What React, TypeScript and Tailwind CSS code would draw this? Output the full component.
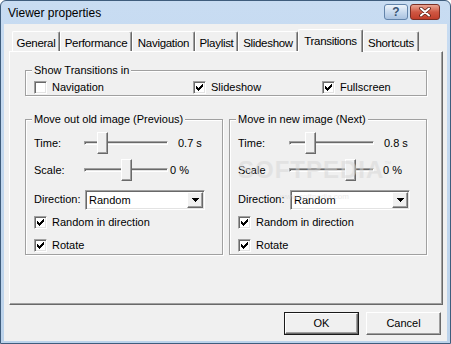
import React from 'react'

const raised =
  'border border-t-white border-l-white border-r-[#696969] border-b-[#696969] shadow-[inset_-1px_-1px_0_#a0a0a0]'
const sunken =
  'border border-t-[#a0a0a0] border-l-[#a0a0a0] border-r-white border-b-white shadow-[inset_1px_1px_0_#696969,inset_-1px_-1px_0_#e3e3e3]'

// classic 7x7 tick, drawn one 3px column at a time
function CheckMark() {
  const tops = [2, 3, 4, 3, 2, 1, 0]
  return (
    <svg width="7" height="7" viewBox="0 0 7 7" shapeRendering="crispEdges">
      {tops.map((t, i) => (
        <rect key={i} x={i} y={t} width="1" height="3" fill="#000" />
      ))}
    </svg>
  )
}

function CheckBox({ label, checked = true, className = '' }: { label: string; checked?: boolean; className?: string }) {
  return (
    <label className={`flex items-center gap-[5px] ${className}`}>
      <span className={`w-[13px] h-[13px] shrink-0 bg-white flex items-center justify-center ${sunken}`}>
        {checked && <CheckMark />}
      </span>
      <span>{label}</span>
    </label>
  )
}

function Slider({
  label,
  value,
  labelClass,
  trackClass,
  thumbClass,
  valueClass,
  rowClass,
}: {
  label: string
  value: string
  labelClass: string
  trackClass: string
  thumbClass: string
  valueClass: string
  rowClass: string
}) {
  return (
    <div className={`flex items-center ${rowClass}`}>
      <span className={labelClass}>{label}</span>
      <div className={`relative h-[22px] flex items-center ${trackClass}`}>
        <div className="w-full h-[4px] border border-t-[#a0a0a0] border-l-[#a0a0a0] border-r-white border-b-white bg-[#e3e3e3] shadow-[inset_1px_1px_0_#696969]" />
        <div className={`absolute top-0 w-[11px] h-[22px] bg-[#f0f0f0] ${raised} ${thumbClass}`} />
      </div>
      <span className={valueClass}>{value}</span>
    </div>
  )
}

function Select({ value, className = '' }: { value: string; className?: string }) {
  return (
    <div className={`h-[20px] w-[120px] bg-white flex items-stretch p-[1px] ${sunken} ${className}`}>
      <span className="flex-1 pl-[2px] leading-[16px]">{value}</span>
      <span className={`w-[16px] bg-[#f0f0f0] flex items-center justify-center ${raised}`}>
        <svg width="7" height="4" viewBox="0 0 7 4" shapeRendering="crispEdges">
          <polygon points="0,0 7,0 3.5,4" fill="#000" />
        </svg>
      </span>
    </div>
  )
}

function GroupBox({ title, className = '', children }: { title: string; className?: string; children: React.ReactNode }) {
  return (
    <fieldset
      className={`border border-[#a0a0a0] shadow-[1px_1px_0_#fff,inset_1px_1px_0_#fff] pl-[8px] pr-[6px] ${className}`}
    >
      <legend className="-ml-[2px] px-[2px] leading-[13px] bg-[#f0f0f0]">{title}</legend>
      {children}
    </fieldset>
  )
}

const tabs = [
  { name: 'General', w: 'w-[48px]' },
  { name: 'Performance', w: 'w-[72px]' },
  { name: 'Navigation', w: 'w-[63px]' },
  { name: 'Playlist', w: 'w-[43px]' },
  { name: 'Slideshow', w: 'w-[60px]' },
  { name: 'Transitions', w: 'w-[65px]', active: true },
  { name: 'Shortcuts', w: 'w-[56px]' },
]

export default function App() {
  return (
    <div className="relative w-[451px] h-[344px] rounded-t-[6px] border border-[#3f5d7d] bg-gradient-to-b from-[#c8dcf2] to-[#bcd3eb] font-['Liberation_Sans',Arial,sans-serif] text-[11px] text-black overflow-hidden">
      {/* title bar */}
      <div className="flex items-start justify-between h-[23px] pl-[7px] pr-[10px]">
        <span className="text-[12px] leading-[24px]">Viewer properties</span>
        <div className="flex gap-[2px] pt-[3px]">
          <div className="w-[24px] h-[16px] rounded-[3px] border border-[#6384aa] bg-gradient-to-b from-[#eef4fb] via-[#c9daee] to-[#a9c2e0] flex items-center justify-center text-[12px] font-bold leading-none text-[#3a5473]">
            ?
          </div>
          <div className="w-[30px] h-[16px] rounded-[3px] border border-[#7a2f25] bg-gradient-to-b from-[#e9a594] via-[#cf5743] to-[#c13e2b] flex items-center justify-center">
            <svg width="12" height="10" viewBox="0 0 12 10">
              <path d="M2 1.5 L10 8.5 M10 1.5 L2 8.5" stroke="#5a2018" strokeWidth="3.6" strokeLinecap="round" />
              <path d="M2 1.5 L10 8.5 M10 1.5 L2 8.5" stroke="#fff" strokeWidth="2" strokeLinecap="round" />
            </svg>
          </div>
        </div>
      </div>

      {/* client area */}
      <div className="mx-[3px] mb-[2px] h-[317px] bg-[#f0f0f0] pt-[5px] px-[5px]">
        <div className="flex items-end h-[22px] pl-[3px]">
          {tabs.map(t =>
            t.active ? (
              <div
                key={t.name}
                className={`relative z-10 -mb-px h-[23px] ${t.w} bg-[#f0f0f0] border-t border-l border-r border-t-white border-l-white border-r-[#696969] rounded-t-[2px] shadow-[inset_-1px_0_0_#a0a0a0] flex justify-center pt-[3px] tracking-[-0.3px] text-[11.5px]`}
              >
                {t.name}
              </div>
            ) : (
              <div
                key={t.name}
                className={`h-[20px] ${t.w} bg-[#f0f0f0] border-t border-l border-r border-t-white border-l-white border-r-[#696969] rounded-t-[2px] shadow-[inset_-1px_0_0_#a0a0a0] flex justify-center pt-[3px] tracking-[-0.3px] text-[11.5px]`}
              >
                {t.name}
              </div>
            )
          )}
        </div>

        <div className={`w-[434px] h-[254px] bg-[#f0f0f0] ${raised} px-[15px] pt-[12px]`}>
          <GroupBox title="Show Transitions in">
            <div className="flex items-center h-[15px] mt-[3px]">
              <CheckBox label="Navigation" checked={false} className="w-[159px]" />
              <CheckBox label="Slideshow" className="w-[129px]" />
              <CheckBox label="Fullscreen" />
            </div>
          </GroupBox>

          <div className="flex gap-[6px] mt-[17px]">
            <GroupBox title="Move out old image (Previous)" className="flex-1">
              <div className="pt-[5px]">
                <Slider
                  label="Time:"
                  value="0.7 s"
                  rowClass="h-[24px]"
                  labelClass="w-[50px]"
                  trackClass="w-[84px]"
                  thumbClass="left-[13px]"
                  valueClass="ml-[10px]"
                />
                <Slider
                  label="Scale:"
                  value="0 %"
                  rowClass="h-[30px]"
                  labelClass="w-[50px]"
                  trackClass="w-[84px]"
                  thumbClass="left-[37px]"
                  valueClass="ml-[2px]"
                />
                <div className="flex items-center h-[29px]">
                  <span className="w-[51px]">Direction:</span>
                  <Select value="Random" />
                </div>
                <CheckBox label="Random in direction" className="h-[17px]" />
                <CheckBox label="Rotate" className="h-[17px] mt-[6px]" />
              </div>
            </GroupBox>

            <GroupBox title="Move in new image (Next)" className="flex-1">
              <div className="pt-[5px]">
                <Slider
                  label="Time:"
                  value="0.8 s"
                  rowClass="h-[24px]"
                  labelClass="w-[51px]"
                  trackClass="w-[85px]"
                  thumbClass="left-[16px]"
                  valueClass="ml-[10px]"
                />
                <Slider
                  label="Scale"
                  value="0 %"
                  rowClass="h-[30px]"
                  labelClass="w-[51px]"
                  trackClass="w-[85px]"
                  thumbClass="left-[56px]"
                  valueClass="ml-[9px]"
                />
                <div className="flex items-center h-[29px]">
                  <span className="w-[52px]">Direction:</span>
                  <Select value="Random" />
                </div>
                <CheckBox label="Random in direction" className="h-[17px]" />
                <CheckBox label="Rotate" className="h-[17px] mt-[6px]" />
              </div>
            </GroupBox>
          </div>
        </div>

        <div className="flex justify-end gap-[7px] pt-[7px] pr-[1px]">
          <button className="w-[75px] h-[23px] border border-[#1a1a1a] bg-[#f0f0f0]">
            <span className={`flex items-center justify-center w-full h-full ${raised}`}>OK</span>
          </button>
          <button className={`w-[75px] h-[23px] bg-[#f0f0f0] ${raised}`}>Cancel</button>
        </div>
      </div>

      {/* faint watermark over the right group */}
      <div className="absolute left-[237px] top-[157px] pointer-events-none select-none text-[#d6d6d6] opacity-50">
        <div className="flex items-start">
          <span className="text-[24px] font-bold tracking-[1px] leading-[24px]">SOFTPEDIA</span>
          <span className="text-[7px] leading-none mt-[2px]">™</span>
        </div>
        <div className="text-[8px] leading-none mt-[11px] ml-[42px]">www.softpedia.com</div>
      </div>
    </div>
  )
}
